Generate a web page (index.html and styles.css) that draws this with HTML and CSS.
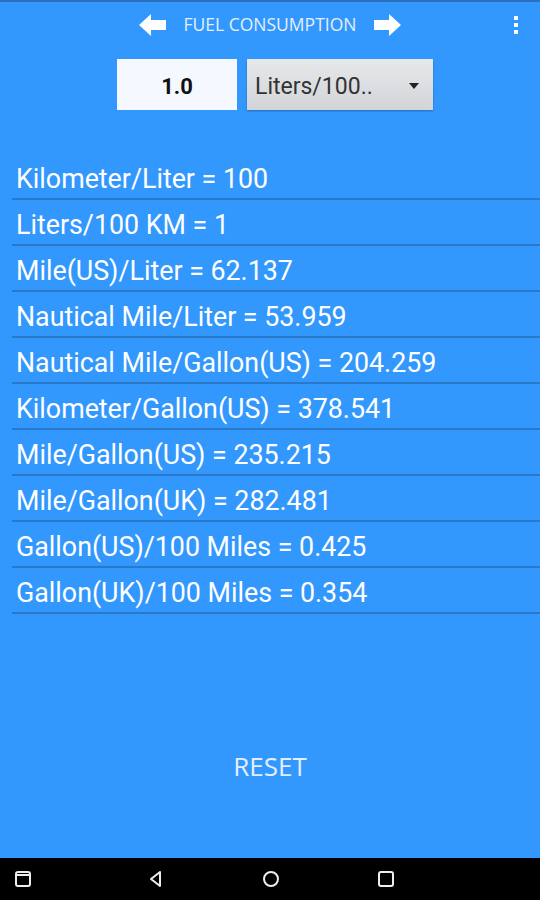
FILE: index.html
```html
<!DOCTYPE html>
<html lang="en">
<head>
    <meta charset="UTF-8">
    <meta name="viewport" content="width=device-width, initial-scale=1.0">
    <title>Fuel Consumption</title>
    <link rel="stylesheet" href="styles.css">
</head>
<body>

<div class="screen">
    <div class="app">
        <header class="topbar">
            <svg class="arrow" width="28" height="22" viewBox="0 0 28 22"><path d="M0 11 L12 0 L12 6 L27 6 L27 16 L12 16 L12 22 Z" fill="#fff"/></svg>
            <span class="title">FUEL CONSUMPTION</span>
            <svg class="arrow" width="28" height="22" viewBox="0 0 28 22"><path d="M28 11 L16 0 L16 6 L1 6 L1 16 L16 16 L16 22 Z" fill="#fff"/></svg>
            <div class="menu">
                <span></span><span></span><span></span>
            </div>
        </header>

        <div class="controls">
            <div class="value-box">1.0</div>
            <div class="unit-select">
                <span>Liters/100..</span>
                <svg width="10" height="6" viewBox="0 0 10 6"><path d="M0 0 L10 0 L5 6 Z" fill="#222"/></svg>
            </div>
        </div>

        <!-- results -->
        <ul class="results">
            <li>Kilometer/Liter = 100</li>
            <li>Liters/100 KM = 1</li>
            <li>Mile(US)/Liter = 62.137</li>
            <li>Nautical Mile/Liter = 53.959</li>
            <li>Nautical Mile/Gallon(US) = 204.259</li>
            <li>Kilometer/Gallon(US) = 378.541</li>
            <li>Mile/Gallon(US) = 235.215</li>
            <li>Mile/Gallon(UK) = 282.481</li>
            <li>Gallon(US)/100 Miles = 0.425</li>
            <li>Gallon(UK)/100 Miles = 0.354</li>
        </ul>

        <div class="reset">RESET</div>
    </div>

    <nav class="navbar">
        <svg width="20" height="20" viewBox="0 0 20 20"><rect x="3" y="3" width="14" height="14" rx="2" fill="none" stroke="#eee" stroke-width="2"/><line x1="3" y1="6" x2="17" y2="6" stroke="#eee" stroke-width="2"/></svg>
        <svg width="20" height="20" viewBox="0 0 20 20"><path d="M14 3 L5 10 L14 17 Z" fill="none" stroke="#eee" stroke-width="2" stroke-linejoin="round"/></svg>
        <svg width="20" height="20" viewBox="0 0 20 20"><circle cx="10" cy="10" r="7" fill="none" stroke="#eee" stroke-width="2"/></svg>
        <svg width="20" height="20" viewBox="0 0 20 20"><rect x="3" y="3" width="14" height="14" rx="2" fill="none" stroke="#eee" stroke-width="2"/></svg>
    </nav>
</div>

</body>
</html>
```

FILE: styles.css
```css
body {
    margin: 0;
    padding: 0;
    background-color: #3398fe;
    font-family: Roboto, "Noto Sans", sans-serif;
}
.screen {
    width: 540px;
    height: 900px;
    display: flex;
    flex-direction: column;
}
.app {
    flex: 1;
    display: flex;
    flex-direction: column;
    border-top: 2px solid #2a6fc0;
    background-color: #3398fe;
}
.topbar {
    height: 46px;
    display: flex;
    align-items: center;
    justify-content: center;
    gap: 17px;
    position: relative;
}
.title {
    font-family: "Open Sans", "DejaVu Sans", sans-serif;
    font-size: 17.5px;
    color: #e4eefc;
    margin-top: -2px;
}
.arrow {
    display: block;
}
.menu {
    position: absolute;
    right: 22px;
    top: 14px;
    display: flex;
    flex-direction: column;
    gap: 3px;
}
.menu span {
    width: 4px;
    height: 4px;
    background-color: #fff;
}
.controls {
    display: flex;
    justify-content: center;
    gap: 10px;
    margin-top: 11px;
    padding-left: 10px;
}
.value-box {
    width: 120px;
    height: 51px;
    padding-top: 3px;
    box-sizing: border-box;
    background-color: #f5f8fe;
    color: #111;
    font-weight: bold;
    font-size: 22px;
    display: flex;
    align-items: center;
    justify-content: center;
}
.unit-select {
    width: 186px;
    height: 51px;
    background: linear-gradient(#e6e8ea, #d2d5d8);
    box-shadow: 0 1px 2px rgba(0,0,0,0.3);
    display: flex;
    align-items: center;
    justify-content: space-between;
    padding: 3px 14px 0 8px;
    box-sizing: border-box;
    font-size: 23px;
    color: #333;
}
.results {
    list-style: none;
    margin: 44px 0 0 12px;
    padding: 0;
}
.results li {
    height: 44px;
    border-bottom: 2px solid #2a78c8;
    color: #fff;
    font-size: 26.8px;
    line-height: 50px;
    padding-left: 4px;
}
.reset {
    margin-top: 134px;
    text-align: center;
    font-family: "Open Sans", "DejaVu Sans", sans-serif;
    font-size: 26px;
    color: #e4eefc;
}
.navbar {
    height: 42px;
    background-color: #000;
    display: flex;
    align-items: center;
}
.navbar svg:nth-child(1) { margin-left: 13px; }
.navbar svg:nth-child(2) { margin-left: 113px; }
.navbar svg:nth-child(3) { margin-left: 95px; }
.navbar svg:nth-child(4) { margin-left: 95px; }
```
